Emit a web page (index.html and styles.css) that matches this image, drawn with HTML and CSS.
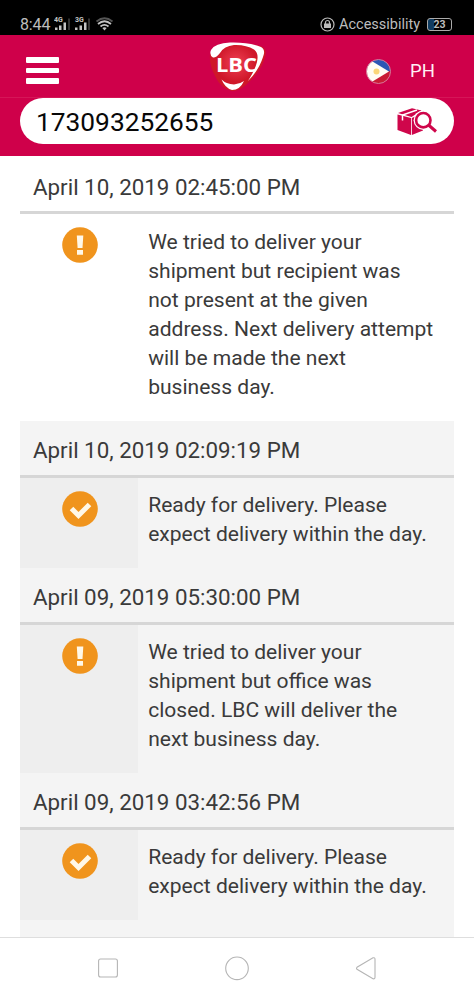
FILE: index.html
```html
<!DOCTYPE html>
<html lang="en">
<head>
<meta charset="utf-8">
<title>LBC Tracking</title>
<link rel="stylesheet" href="styles.css">
</head>
<body>
<div class="phone">
  <div class="status">
    <span class="clock">8:44</span>
    <svg class="signals" width="62" height="18" viewBox="0 0 62 18">
      <g fill="#c4c4c4">
        <text class="net" x="0" y="7">4G</text><text class="net" x="21" y="7">3G</text>
        <path d="M1 12.500h2.500V15H1zM5 10.500h2.500V15H5zM9.500 7.500H12V15H9.500zM21 12.500h2.500V15H21zM25.500 10.500H28V15h-2.500zM30 7.500h2.500V15H30z"/>
        <path fill="#333" d="M14 3.500h2V15h-2zM34 3.500h2V15h-2z"/>
      </g>
      <g fill="none" stroke="#c4c4c4" stroke-width="1.700">
        <path stroke="#555" d="M42.500 6.500q8-6.500 16 0"/><path d="M44 9q6.500-5.500 13 0M46.500 11.500q4-3.300 8 0"/>
      </g>
      <path fill="#c4c4c4" d="M48.300 13q2.200-1.600 4.400 0l-2.200 2.500z"/>
    </svg>
    <svg class="lock" width="15" height="15" viewBox="0 0 15 15">
      <circle cx="7.500" cy="7.500" r="6.500" fill="none" stroke="#bbb" stroke-width="1.200"/>
      <path d="M5.500 7V5.500a2 2 0 0 1 4 0V7" fill="none" stroke="#bbb" stroke-width="1.200"/>
      <path d="M4 6.500h7v4.500H4z" fill="#bbb"/>
    </svg>
    <span class="access">Accessibility</span>
    <span class="battery">23</span>
  </div>
  <header class="header">
    <div class="topbar">
      <div class="burger"><i></i><i></i><i></i></div>
      <svg class="logo" width="60" height="52" viewBox="0 0 60 52">
        <defs><radialGradient id="red"><stop offset="0" stop-color="#ee4054"/><stop offset="1" stop-color="#cf1729"/></radialGradient></defs>
        <path d="M2 14Q3 6 13 3Q32 0 52 5Q59 7 57.500 14Q55 27 43 39Q32 51 24 50Q13 48 7 35Q1 23 2 14Z" fill="#cf1729"/>
        <ellipse cx="28" cy="22" rx="20" ry="19" fill="url(#red)"/>
        <path d="M5 16.500Q1 14 3 9Q7 2 22 1.500Q41 1 53 6Q58 9 55 16Q51 29 40 40Q47 29 49 21Q51 12 46 8.500Q38 3.500 26 4Q16 5 12 12Q8 17 5 16.500Z" fill="#fff"/>
        <path d="M13.500 38.500Q18 43 26 43.500Q32 43 36 40Q32 49 24 49Q17 47 13.500 38.500Z" fill="#fff"/>
        <text class="brand" x="8" y="30.500" textLength="41" lengthAdjust="spacingAndGlyphs">LBC</text>
      </svg>
      <svg class="flag" width="27" height="27" viewBox="0 0 27 27">
        <defs><clipPath id="round"><circle cx="13.500" cy="13.500" r="12"/></clipPath></defs>
        <g clip-path="url(#round)"><path d="M0 0h27v13.500H0z" fill="#2c57b5"/><path d="M0 13.500h27V27H0z" fill="#c91b35"/><path d="M-1 5L5 2l19 11.500L5 25l-6-3z" fill="#fffdf5"/></g>
        <circle cx="13.500" cy="13.500" r="12" fill="none" stroke="#d9799a" stroke-width="1"/>
        <circle cx="11.500" cy="13.500" r="3" fill="#fbd77a"/>
      </svg>
      <span class="country">PH</span>
    </div>
    <div class="search">
      <span class="number">173093252655</span>
      <svg class="track" width="42" height="30" viewBox="0 0 42 30">
        <g fill="#cf064b"><path d="M.500 7.500L14 11v17L.500 23z"/><path d="M1 6L15 1.200l9.500 2.300L14.500 10z"/><path d="M14.800 11L26 6v17.500L14.800 28z"/></g>
        <path d="M5.500 13.500V8L20 3" fill="none" stroke="#fff" stroke-width="1.500"/>
        <circle cx="26.300" cy="13.200" r="9.700" fill="#fff"/><circle cx="26.300" cy="13.200" r="7.200" fill="#fff" stroke="#cf064b" stroke-width="2.600"/>
        <path d="M31.500 18l7.500 6.500" stroke="#cf064b" stroke-width="3"/>
      </svg>
    </div>
  </header>
  <svg class="symbols"><defs>
    <symbol id="alert" viewBox="0 0 36 36"><circle cx="18" cy="18" r="17.800" fill="#f0941d"/><path d="M14.800 8.500h6.500l-.8 12.500h-4.900zM15 23h6v4.800h-6z" fill="#fff8e8"/></symbol>
    <symbol id="done" viewBox="0 0 36 36"><circle cx="18" cy="18" r="17.800" fill="#f0941d"/><path d="M9.500 17.500l7 7L27.500 13.500" fill="none" stroke="#fff8e8" stroke-width="5"/></symbol>
  </defs></svg>
  <main class="events">
    <section class="event latest">
      <h2 class="date">April 10, 2019 02:45:00 PM</h2>
      <div class="detail"><div class="mark"><svg class="icon"><use href="#alert"/></svg></div>
      <p class="message">We tried to deliver your<br>shipment but recipient was<br>not present at the given<br>address. Next delivery attempt<br>will be made the next<br>business day.</p></div>
    </section>
    <section class="event">
      <h2 class="date">April 10, 2019 02:09:19 PM</h2>
      <div class="detail"><div class="mark"><svg class="icon"><use href="#done"/></svg></div>
      <p class="message">Ready for delivery. Please<br>expect delivery within the day.</p></div>
    </section>
    <section class="event">
      <h2 class="date">April 09, 2019 05:30:00 PM</h2>
      <div class="detail"><div class="mark"><svg class="icon"><use href="#alert"/></svg></div>
      <p class="message">We tried to deliver your<br>shipment but office was<br>closed. LBC will deliver the<br>next business day.</p></div>
    </section>
    <section class="event">
      <h2 class="date">April 09, 2019 03:42:56 PM</h2>
      <div class="detail"><div class="mark"><svg class="icon"><use href="#done"/></svg></div>
      <p class="message">Ready for delivery. Please<br>expect delivery within the day.</p></div>
    </section>
  </main>
  <nav class="nav">
    <svg width="474" height="62" viewBox="0 0 474 62" fill="none" stroke="#b5b5b5" stroke-width="1.100">
      <rect x="98.600" y="21" width="18.800" height="18" rx="2"/><circle cx="237" cy="30.300" r="11.300"/><path d="M357 29.300Q356 30.300 357 31.300L373 40.800Q375 41.300 375 39.300V21.300Q375 19.300 373 19.800Z"/>
    </svg>
  </nav>
</div>
</body>
</html>
```
FILE: styles.css
```css
* { box-sizing: border-box; }
body { margin: 0; background: #fff; font-family: Roboto, "Liberation Sans", sans-serif; color: #3a3a3a; }
.phone { width: 474px; height: 1000px; display: flex; flex-direction: column; overflow: hidden; }
.status { height: 35px; flex: none; background: #000; color: #bdbdbd; display: flex; align-items: center; padding: 13px 20px 0; }
.clock { font-size: 16px; width: 33px; letter-spacing: -.15px; }
.signals { flex: none; margin-left: 1px; }
.net { font-size: 7px; font-weight: 700; }
.lock { margin-left: 204px; }
.access { font-size: 14.5px; margin-left: 4px; width: 88px; white-space: nowrap; }
.battery { width: 25px; height: 13px; border: 1px solid #aaa; border-radius: 3px; font-size: 10.5px; line-height: 11px; font-weight: 700; text-align: center; background: linear-gradient(90deg, #103c61 24%, #000 24%); }
.header { height: 121px; flex: none; background: #cf004a; }
.topbar { height: 63px; display: flex; align-items: center; border-bottom: 1px solid #d51658; padding: 0 26px; }
.burger { display: flex; flex-direction: column; gap: 5px; width: 33px; padding-top: 9px; }
.burger i { height: 5.7px; background: #fff; border-radius: 1px; }
.logo { margin-left: 149px; margin-top: 2px; }
.brand { font: 700 19.5px "Open Sans", sans-serif; fill: #fff; }
.flag { margin-left: 97px; margin-top: 11px; }
.country { color: #fff0f5; font-size: 18.5px; margin: 9px 0 0 18px; }
.search { height: 46px; margin: 0 20px; background: #fff; border-radius: 23px; display: flex; align-items: center; justify-content: space-between; padding: 2px 15px 0 16px; }
.number { color: #080808; font-size: 26.3px; }
.symbols { width: 0; height: 0; display: block; flex: none; }
.events { flex: 1; margin: 0 20px; padding-top: 1px; background: linear-gradient(#fff 265px, #f4f4f4 265px); min-height: 0; overflow: hidden; }
.event { background: #f4f4f4; }
.latest { background: #fff; }
.date { margin: 0; height: 57px; border-bottom: 3px solid #d6d6d6; padding: 1px 13px 0; font-size: 22.35px; line-height: 56px; font-weight: 400; white-space: nowrap; }
.latest .date { padding-top: 2px; }
.detail { display: flex; }
.mark { width: 118px; flex: none; background: #eee; padding: 13px 0 0 42px; }
.latest .mark { background: #fff; }
.icon { display: block; width: 36px; height: 36px; }
.message { margin: 0; padding: 12px 0 20px 10.2px; font-size: 21.05px; line-height: 29.05px; white-space: nowrap; }
.latest .message { padding-top: 12.7px; padding-bottom: 19.8px; }
.nav { height: 63px; flex: none; border-top: 1px solid #dedede; background: #fff; }
```
